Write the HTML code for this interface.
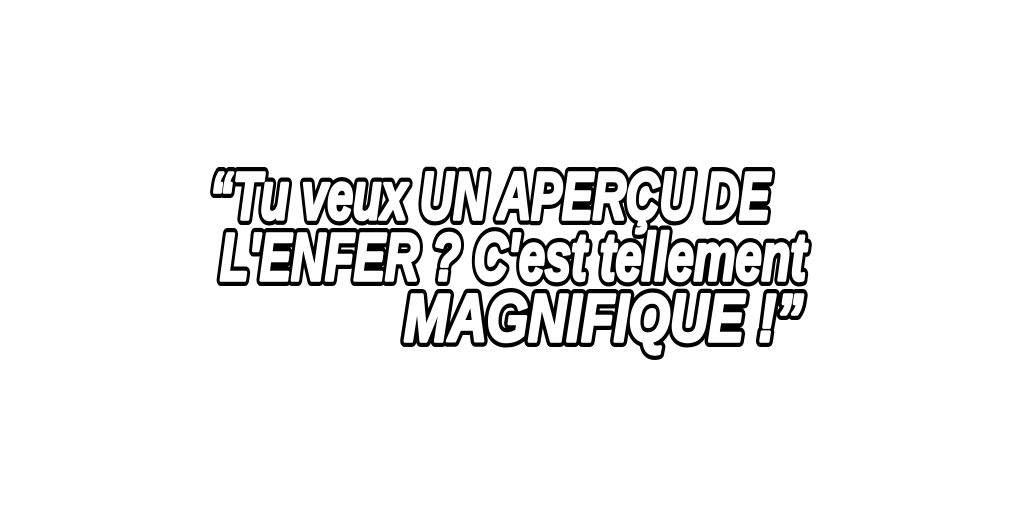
<!DOCTYPE html>
<html><head><meta charset="utf-8"><style>html,body{margin:0;background:#fff;width:1024px;height:512px;overflow:hidden}</style></head>
<body>
<svg width="1024" height="512" xmlns="http://www.w3.org/2000/svg">
<g font-family="'Liberation Sans Narrow','Liberation Sans',sans-serif" font-weight="bold" font-style="italic" font-size="67" fill="#000" stroke="#000" stroke-width="12" stroke-linejoin="round">
<text x="210" y="219" textLength="560" lengthAdjust="spacingAndGlyphs">“Tu veux UN APERÇU DE</text>
<text x="220" y="280" textLength="586" lengthAdjust="spacingAndGlyphs">L'ENFER ? C'est tellement</text>
<text x="404" y="341" textLength="399" lengthAdjust="spacingAndGlyphs">MAGNIFIQUE !”</text>
</g>
<g font-family="'Liberation Sans Narrow','Liberation Sans',sans-serif" font-weight="bold" font-style="italic" font-size="67" fill="#fff" stroke="#fff" stroke-width="3.5" stroke-linejoin="round">
<text x="210" y="219" textLength="560" lengthAdjust="spacingAndGlyphs">“Tu veux UN APERÇU DE</text>
<text x="220" y="280" textLength="586" lengthAdjust="spacingAndGlyphs">L'ENFER ? C'est tellement</text>
<text x="404" y="341" textLength="399" lengthAdjust="spacingAndGlyphs">MAGNIFIQUE !”</text>
</g>
</svg>
</body></html>
